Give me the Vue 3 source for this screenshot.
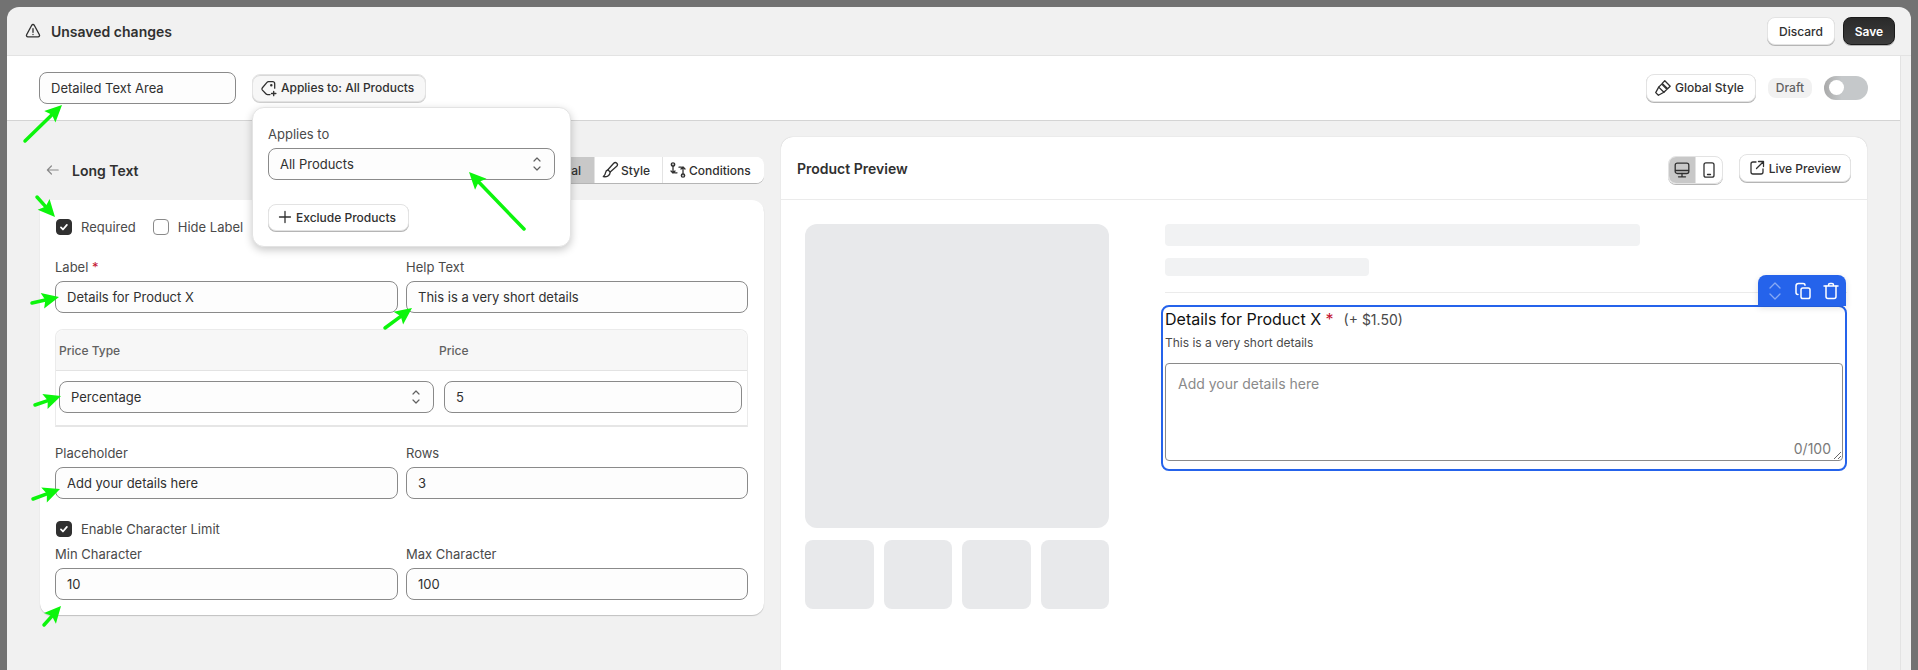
<template>
  <div class="shell">
    <!-- Top save bar -->
    <header class="save-bar">
      <div class="save-title">
        <svg class="alert-ico" viewBox="0 0 20 20" fill="none" stroke="currentColor" stroke-width="1.5" stroke-linejoin="round" stroke-linecap="round">
          <path d="M8.6 3.6 2.9 14.2c-.6 1.1.2 2.3 1.4 2.3h11.4c1.2 0 2-1.2 1.4-2.3L11.4 3.6c-.6-1.1-2.2-1.1-2.8 0Z" />
          <path d="M10 7.5v4M10 13.9v.1" />
        </svg>
        <span>Unsaved changes</span>
      </div>
      <div class="save-actions">
        <button class="btn discard">Discard</button>
        <button class="btn save">Save</button>
      </div>
    </header>

    <div class="page-row">
      <div class="page">
        <!-- Name + status bar -->
        <div class="toolbar">
          <input class="field name-field" type="text" value="Detailed Text Area" readonly />
          <div class="applies-wrap">
            <button class="btn applies-btn">
              <svg class="ico" viewBox="0 0 20 20" fill="none" stroke="currentColor" stroke-width="1.3" stroke-linecap="round" stroke-linejoin="round">
                <path d="M11 16.6H8.6a2 2 0 0 1-1.5-.6L3.4 12.100a1.800 1.800 0 0 1 0-2.400L8 4.400a2 2 0 0 1 1.500-.7h4.200a2 2 0 0 1 2 2v4.500" />
                <circle cx="12.300" cy="7.300" r=".6" />
                <path d="M14.700 13.300v4.400M12.500 15.500h4.400" />
              </svg>
              Applies to: All Products
            </button>
            <div class="popup">
              <div class="lbl">Applies to</div>
              <div class="field select-field">
                <span>All Products</span>
                <svg class="ico chev" viewBox="0 0 20 20" fill="none" stroke="currentColor" stroke-width="1.2" stroke-linecap="round" stroke-linejoin="round">
                  <path d="M7 7 10 4l3 3M7 13l3 3 3-3" />
                </svg>
              </div>
              <button class="btn exclude-btn">
                <svg class="ico" viewBox="0 0 20 20" fill="none" stroke="currentColor" stroke-width="1.300" stroke-linecap="round">
                  <path d="M10 4.500v11M4.500 10h11" />
                </svg>
                Exclude Products
              </button>
            </div>
          </div>
          <div class="toolbar-right">
            <button class="btn">
              <svg class="ico" viewBox="0 0 20 20" fill="none" stroke="currentColor" stroke-width="1.300" stroke-linejoin="round" stroke-linecap="round">
                <path d="m11.800 2.800 5.400 5.400-2.600 2.600-5.400-5.400 2.600-2.600Z" />
                <path d="m8.700 6.100 5.200 5.200-3 3-5.200-5.200 3-3Z" />
                <path d="m5.700 9.100-3 5.500 2.700 2.700 5.500-3" />
              </svg>
              Global Style
            </button>
            <span class="draft">Draft</span>
            <span class="toggle"><span class="knob"></span></span>
          </div>
        </div>

        <main class="main">
          <!-- Left settings column -->
          <section class="left">
            <div class="title-row">
              <svg class="back" viewBox="0 0 20 20" fill="none" stroke="currentColor" stroke-width="1.500" stroke-linecap="round" stroke-linejoin="round">
                <path d="M16.500 10h-13M8 5l-5 5 5 5" />
              </svg>
              <h2>Long Text</h2>
              <div class="tabs">
                <button class="tab active">General</button>
                <button class="tab tab-style">
                  <svg class="ico" viewBox="0 0 20 20" fill="none" stroke="currentColor" stroke-width="1.300" stroke-linejoin="round" stroke-linecap="round">
                    <path d="M16.800 3.200c-1-.9-2.200-.8-3.100.1L7.900 9.800l2.300 2.300 6.500-5.800c.9-.9 1-2.200.1-3.100Z" />
                    <path d="M7.800 10c-2.300.3-2.200 2.600-2.700 4.100-.2.700-1 1.400-1.800 2.500 2.900.5 6.700-.3 6.900-4.500" />
                  </svg>
                  Style
                </button>
                <button class="tab tab-cond">
                  <svg class="ico" viewBox="0 0 20 20" fill="none" stroke="currentColor" stroke-width="1.300" stroke-linejoin="round" stroke-linecap="round">
                    <circle cx="5" cy="4.500" r="1.700" />
                    <circle cx="15" cy="15.500" r="1.700" />
                    <path d="M5 6.500v5.800c0 1.300.8 2 2 2h2M7 12.500 5 14.500 3 12.500" transform="translate(0 -1.500)" />
                    <path d="M15 13.500V7.700c0-1.300-.8-2-2-2h-2M13 7.500l2-2 2 2" transform="translate(0 1.500)" />
                  </svg>
                  Conditions
                </button>
              </div>
            </div>

            <div class="form-card">
              <div class="checks">
                <label class="check"><span class="box on"><svg viewBox="0 0 16 16" fill="none" stroke="#fff" stroke-width="2" stroke-linecap="round" stroke-linejoin="round"><path d="m4.500 8.500 2.300 2.300 4.500-5.300" /></svg></span>Required</label>
                <label class="check"><span class="box"></span>Hide Label</label>
              </div>

              <div class="two-col">
                <div>
                  <div class="lbl">Label <span class="req">*</span></div>
                  <input class="field" type="text" value="Details for Product X" readonly />
                </div>
                <div>
                  <div class="lbl">Help Text</div>
                  <input class="field" type="text" value="This is a very short details" readonly />
                </div>
              </div>

              <div class="price-table">
                <div class="price-head">
                  <span>Price Type</span>
                  <span>Price</span>
                </div>
                <div class="price-row">
                  <div class="field select-field">
                    <span>Percentage</span>
                    <svg class="ico chev" viewBox="0 0 20 20" fill="none" stroke="currentColor" stroke-width="1.2" stroke-linecap="round" stroke-linejoin="round">
                      <path d="M7 7 10 4l3 3M7 13l3 3 3-3" />
                    </svg>
                  </div>
                  <input class="field" type="text" value="5" readonly />
                </div>
              </div>

              <div class="two-col">
                <div>
                  <div class="lbl">Placeholder</div>
                  <input class="field" type="text" value="Add your details here" readonly />
                </div>
                <div>
                  <div class="lbl">Rows</div>
                  <input class="field" type="text" value="3" readonly />
                </div>
              </div>

              <label class="check limit"><span class="box on"><svg viewBox="0 0 16 16" fill="none" stroke="#fff" stroke-width="2" stroke-linecap="round" stroke-linejoin="round"><path d="m4.500 8.500 2.300 2.300 4.500-5.300" /></svg></span>Enable Character Limit</label>

              <div class="two-col">
                <div>
                  <div class="lbl">Min Character</div>
                  <input class="field" type="text" value="10" readonly />
                </div>
                <div>
                  <div class="lbl">Max Character</div>
                  <input class="field" type="text" value="100" readonly />
                </div>
              </div>
            </div>
          </section>

          <!-- Preview -->
          <section class="preview">
            <div class="preview-head">
              <h3>Product Preview</h3>
              <div class="device-toggle">
                <span class="device active">
                  <svg class="ico" viewBox="0 0 20 20" fill="none" stroke="currentColor" stroke-width="1.300" stroke-linejoin="round" stroke-linecap="round">
                    <rect x="3.200" y="3.200" width="13.600" height="10.300" rx="2" />
                    <path d="M3.500 10.500h13M10 13.500v3.200M6.500 16.800h7" />
                  </svg>
                </span>
                <span class="device">
                  <svg class="ico" viewBox="0 0 20 20" fill="none" stroke="currentColor" stroke-width="1.300" stroke-linecap="round">
                    <rect x="5" y="2.800" width="10" height="14.400" rx="2" />
                    <path d="M8.500 14.500h3" />
                  </svg>
                </span>
              </div>
              <button class="btn live-btn">
                <svg class="ico" viewBox="0 0 20 20" fill="none" stroke="currentColor" stroke-width="1.300" stroke-linecap="round" stroke-linejoin="round">
                  <path d="M9 4H6a2 2 0 0 0-2 2v8a2 2 0 0 0 2 2h8a2 2 0 0 0 2-2v-3" />
                  <path d="M11.500 3.500h5v5M16.300 3.700 9.500 10.500" />
                </svg>
                Live Preview
              </button>
            </div>

            <div class="preview-body">
              <div class="gallery">
                <div class="hero-img"></div>
                <div class="thumbs">
                  <div v-for="n in 4" :key="n" class="thumb"></div>
                </div>
              </div>

              <div class="product">
                <div class="skel skel-title"></div>
                <div class="skel skel-price"></div>
                <div class="divider"></div>

                <div class="selected-block">
                  <div class="block-tools">
                    <svg class="tool tool-dim" viewBox="0 0 20 20" fill="none" stroke="currentColor" stroke-width="1.300" stroke-linecap="round" stroke-linejoin="round">
                      <path d="M5 7l5-5 5 5M5 13l5 5 5-5" />
                    </svg>
                    <svg class="tool" viewBox="0 0 20 20" fill="none" stroke="currentColor" stroke-width="1.500" stroke-linejoin="round" stroke-linecap="round">
                      <rect x="8" y="7" width="9" height="10.500" rx="1.800" />
                      <path d="M5 13.500c-1 0-2-.8-2-2V5c0-1.500 1-2.500 2.500-2.500H10c1 0 2 .7 2 1.700" />
                    </svg>
                    <svg class="tool" viewBox="0 0 20 20" fill="none" stroke="currentColor" stroke-width="1.500" stroke-linejoin="round" stroke-linecap="round">
                      <path d="M3 5h14M7.500 5V4c0-.9.600-1.500 1.500-1.500h2c.9 0 1.500.6 1.500 1.500v1" />
                      <path d="M5 5v10.500c0 1.200.8 2 2 2h6c1.200 0 2-.8 2-2V5" />
                    </svg>
                  </div>
                  <div class="block-title">
                    <span class="block-name">Details for Product X <span class="req">*</span></span>
                    <span class="block-price">(+ $1.50)</span>
                  </div>
                  <div class="block-help">This is a very short details</div>
                  <div class="area-wrap">
                    <textarea class="area" placeholder="Add your details here"></textarea>
                    <span class="counter">0/100</span>
                  </div>
                </div>
              </div>
            </div>
          </section>
        </main>
      </div>
      <div class="gutter"></div>
    </div>
  </div>

  <!-- Green annotation arrows drawn on top of the screenshot -->
  <svg class="notes" width="1918" height="670" viewBox="0 0 1918 670">
    <g v-for="(a, i) in arrows" :key="i">
      <line :x1="a.x1" :y1="a.y1" :x2="a.mx" :y2="a.my" stroke="#0cf50c" stroke-width="3.5" stroke-linecap="round" />
      <polygon :points="a.head" fill="#0cf50c" />
    </g>
  </svg>
</template>

<script setup>
// tail -> tip of each annotation arrow
const rawArrows = [
  [25, 141, 62, 105],
  [37, 197, 55, 217],
  [524, 229, 469, 172],
  [32, 303, 59, 297],
  [385, 328, 412, 308],
  [35, 405, 61, 396],
  [33, 499, 60, 489],
  [44, 625, 61, 606]
]

const arrows = rawArrows.map(([x1, y1, x2, y2]) => {
  const len = Math.hypot(x2 - x1, y2 - y1)
  const ux = (x2 - x1) / len
  const uy = (y2 - y1) / len
  const headLen = Math.min(17, len * 0.65)
  const bx = x2 - ux * headLen
  const by = y2 - uy * headLen
  const nx = bx + ux * 3
  const ny = by + uy * 3
  const w = 8
  return {
    x1,
    y1,
    mx: nx,
    my: ny,
    head: `${x2},${y2} ${bx - uy * w},${by + ux * w} ${nx},${ny} ${bx + uy * w},${by - ux * w}`
  }
})
</script>

<style>
html,
body {
  margin: 0;
  height: 670px;
  overflow: hidden;
  background: #727272;
}
</style>

<style scoped>
* {
  box-sizing: border-box;
}

.shell {
  margin: 7px 7px 0;
  height: 663px;
  border-radius: 12px 12px 0 0;
  overflow: hidden;
  background: #f1f1f1;
  color: #303030;
  font-family: Inter, "Liberation Sans", sans-serif;
  font-size: 13px;
}

.save-bar {
  height: 49px;
  display: flex;
  align-items: center;
  justify-content: space-between;
  padding: 0 16px 0 17px;
  border-bottom: 1px solid #e3e3e3;
}

.save-title {
  display: flex;
  align-items: center;
  gap: 9px;
  font-size: 14px;
  font-weight: 600;
}

.alert-ico {
  width: 18px;
  height: 18px;
  flex: none;
}

.save-actions {
  display: flex;
  gap: 8px;
}

/* 20px artwork on a 16px layout slot */
.ico {
  width: 20px;
  height: 20px;
  margin: -2px;
  flex: none;
}

.btn {
  display: inline-flex;
  align-items: center;
  gap: 4px;
  height: 28px;
  padding: 0 10px;
  border: 1px solid #e3e3e3;
  border-radius: 8px;
  background: #fff;
  color: #303030;
  font-family: inherit;
  font-size: 12px;
  font-weight: 500;
  box-shadow: 0 1px 0 #b5b5b5;
  white-space: nowrap;
}

.discard {
  width: 68px;
  justify-content: center;
}

.save {
  width: 52px;
  justify-content: center;
  background: linear-gradient(#2a2a2a, #3d3d3d);
  border-color: #1a1a1a;
  color: #fff;
  font-weight: 600;
}

.page-row {
  display: flex;
  height: 614px;
}

.page {
  flex: 1;
  min-width: 0;
}

.gutter {
  width: 11px;
  background: #f1f1f1;
  border-left: 1px solid #e3e3e3;
}

.toolbar {
  height: 65px;
  display: flex;
  align-items: center;
  gap: 16px;
  padding: 0 32px 1px 32px;
  background: #fff;
  border-bottom: 1px solid #d4d4d4;
}

.field {
  display: block;
  width: 100%;
  height: 32px;
  padding: 0 11px;
  border: 1px solid #8a8a8a;
  border-radius: 8px;
  background: #fdfdfd;
  color: #303030;
  font-family: inherit;
  font-size: 13px;
  outline: none;
}

.name-field {
  width: 197px;
}

.applies-wrap {
  position: relative;
}

.applies-btn {
  width: 174px;
  padding: 0 8px;
  background: #f7f7f7;
  box-shadow: 0 1px 0 #cfcfcf, inset 0 1px 0 #d8d8d8;
}

.popup {
  position: absolute;
  left: 0;
  top: 33px;
  width: 319px;
  height: 140px;
  padding: 16px 15px;
  background: #fff;
  border: 1px solid #e3e3e3;
  border-radius: 12px;
  box-shadow: 0 3px 8px rgba(0, 0, 0, 0.22);
  z-index: 5;
}

.lbl {
  height: 20px;
  margin-bottom: 4px;
  line-height: 20px;
  font-size: 13px;
  color: #4a4a4a;
}

.req {
  color: #c4122f;
}

.select-field {
  display: flex;
  align-items: center;
  justify-content: space-between;
  padding-right: 9px;
}

.chev {
  color: #616161;
}

.exclude-btn {
  margin-top: 24px;
  width: 141px;
  height: 27px;
  padding: 0 8px;
  gap: 3px;
}

.toolbar-right {
  margin-left: auto;
  display: flex;
  align-items: center;
}

.toolbar-right .btn {
  width: 110px;
  padding: 0 8px;
}

.draft {
  margin-left: 12px;
  width: 44px;
  height: 20px;
  line-height: 20px;
  text-align: center;
  border-radius: 8px;
  background: #f1f1f1;
  color: #616161;
  font-size: 12px;
  font-weight: 500;
}

.toggle {
  margin-left: 12px;
  width: 44px;
  height: 24px;
  border-radius: 12px;
  background: linear-gradient(90deg, #a9a9a9, #c5c8ca 40%);
  display: flex;
  align-items: center;
  padding-left: 5px;
}

.knob {
  width: 15px;
  height: 15px;
  border-radius: 50%;
  background: #fff;
}

.main {
  display: grid;
  grid-template-columns: 724px 1086px;
  column-gap: 17px;
  padding: 16px 0 0 33px;
  height: 549px;
  overflow: hidden;
}

.left {
  padding-top: 20px;
}

.title-row {
  display: flex;
  align-items: center;
  height: 26px;
  margin-bottom: 17px;
  padding-left: 5px;
}

.back {
  width: 16px;
  height: 16px;
  color: #8a8a8a;
}

.title-row h2 {
  margin: 0 0 0 11px;
  font-size: 14px;
  font-weight: 600;
}

.tabs {
  margin-left: auto;
  display: flex;
  height: 26px;
  background: #fff;
  border-radius: 8px;
  box-shadow: 0 1px 0 #b5b5b5;
  overflow: hidden;
}

.tab {
  display: flex;
  align-items: center;
  gap: 3px;
  padding: 0 0 0 7px;
  border: 0;
  border-left: 1px solid #e3e3e3;
  background: #fff;
  color: #303030;
  font-family: inherit;
  font-size: 12px;
  font-weight: 500;
}

.tab.active {
  background: #c8c8c8;
  padding: 0 13px;
}

.tab-style {
  width: 68px;
}

.tab-cond {
  width: 102px;
}

.form-card {
  height: 415px;
  padding: 19px 16px 0 15px;
  background: #fff;
  border-radius: 12px;
  box-shadow: 0 1px 1px rgba(0, 0, 0, 0.2);
}

.checks {
  display: flex;
  gap: 17px;
  margin: 0 0 22px 1px;
}

.check {
  display: flex;
  align-items: center;
  gap: 9px;
  height: 16px;
  color: #4a4a4a;
  font-size: 13px;
}

.box {
  width: 16px;
  height: 16px;
  flex: none;
  border: 1px solid #8a8a8a;
  border-radius: 4px;
  background: #fff;
}

.box.on {
  background: #303030;
  border-color: #303030;
  display: flex;
  align-items: center;
  justify-content: center;
}

.box svg {
  width: 14px;
  height: 14px;
}

.two-col {
  display: grid;
  grid-template-columns: 343px 342px;
  column-gap: 8px;
}

.price-table {
  margin: 16px 0;
  height: 98px;
  border: 1px solid #ebebeb;
  border-bottom: 2px solid #e6e6e6;
  border-radius: 8px 8px 0 0;
}

.price-head {
  display: grid;
  grid-template-columns: 380px 1fr;
  align-items: center;
  height: 41px;
  padding-left: 3px;
  background: #f7f7f7;
  border-bottom: 1px solid #e3e3e3;
  border-radius: 8px 8px 0 0;
  font-size: 12px;
  font-weight: 500;
  color: #616161;
}

.price-row {
  display: grid;
  grid-template-columns: 375px 298px;
  column-gap: 10px;
  padding: 10px 4px 0 3px;
}

.limit {
  margin: 22px 0 7px 1px;
}

.preview {
  height: 560px;
  background: #fff;
  border-radius: 12px 12px 0 0;
  box-shadow: 0 0 1px rgba(0, 0, 0, 0.25);
}

.preview-head {
  display: flex;
  align-items: center;
  height: 63px;
  padding: 0 16px;
  border-bottom: 1px solid #ebebeb;
}

.preview-head h3 {
  margin: 0 auto 0 0;
  font-size: 14px;
  font-weight: 600;
}

.device-toggle {
  display: flex;
  width: 55px;
  height: 28px;
  margin-right: 16px;
  margin-top: 3px;
  border-radius: 8px;
  border: 1px solid #e3e3e3;
  box-shadow: 0 1px 0 #b5b5b5;
  overflow: hidden;
}

.device {
  flex: 1;
  display: flex;
  align-items: center;
  justify-content: center;
}

.device.active {
  background: #c8c8c8;
  border-right: 1px solid #e3e3e3;
}

.live-btn {
  padding: 0 9px;
}

.preview-body {
  display: flex;
  gap: 56px;
  padding: 24px 20px 0 24px;
}

.gallery {
  width: 304px;
  flex: none;
}

.hero-img {
  height: 304px;
  border-radius: 12px;
  background: #e8e9eb;
}

.thumbs {
  display: grid;
  grid-template-columns: repeat(4, 1fr);
  gap: 10px;
  margin-top: 12px;
}

.thumb {
  height: 69px;
  border-radius: 8px;
  background: #e8e9eb;
}

.product {
  flex: 1;
  min-width: 0;
}

.skel {
  border-radius: 4px;
  background: #f1f2f3;
}

.skel-title {
  width: 475px;
  height: 22px;
}

.skel-price {
  width: 204px;
  height: 18px;
  margin-top: 12px;
}

.divider {
  height: 1px;
  margin-top: 16px;
  background: #ebebeb;
}

.selected-block {
  position: relative;
  margin: 12px 0 0 -4px;
  height: 166px;
  padding: 2px 2px 0 2px;
  border: 2px solid #2563eb;
  border-radius: 8px;
}

.block-tools {
  position: absolute;
  right: -1px;
  top: -32px;
  width: 88px;
  height: 31px;
  display: flex;
  align-items: center;
  gap: 8px;
  padding-left: 7px;
  background: #2563eb;
  border-radius: 8px 8px 0 0;
  color: #fff;
  box-shadow: 0 2px 6px rgba(0, 0, 0, 0.12);
}

.tool {
  width: 20px;
  height: 20px;
  flex: none;
}

.tool-dim {
  opacity: 0.45;
}

.block-title {
  display: flex;
  align-items: center;
  height: 20px;
}

.block-name {
  font-size: 16px;
  color: #111;
}

.block-price {
  margin-left: 10px;
  font-size: 14px;
  color: #4a4a4a;
}

.block-help {
  margin-top: 6px;
  height: 16px;
  line-height: 16px;
  font-size: 12px;
  color: #4a4a4a;
}

.area-wrap {
  position: relative;
  margin-top: 12px;
}

.area {
  display: block;
  width: 100%;
  height: 98px;
  min-height: 98px;
  padding: 10px 12px;
  border: 1px solid #8a8a8a;
  border-radius: 4px;
  background: #fff;
  font-family: inherit;
  font-size: 14px;
  line-height: 20px;
  resize: both;
  outline: none;
}

.area::placeholder {
  color: #8a8a8a;
}

.counter {
  position: absolute;
  right: 12px;
  bottom: 4px;
  font-size: 14px;
  color: #7a7a7a;
}

.notes {
  position: absolute;
  left: 0;
  top: 0;
  pointer-events: none;
  z-index: 10;
}
</style>
